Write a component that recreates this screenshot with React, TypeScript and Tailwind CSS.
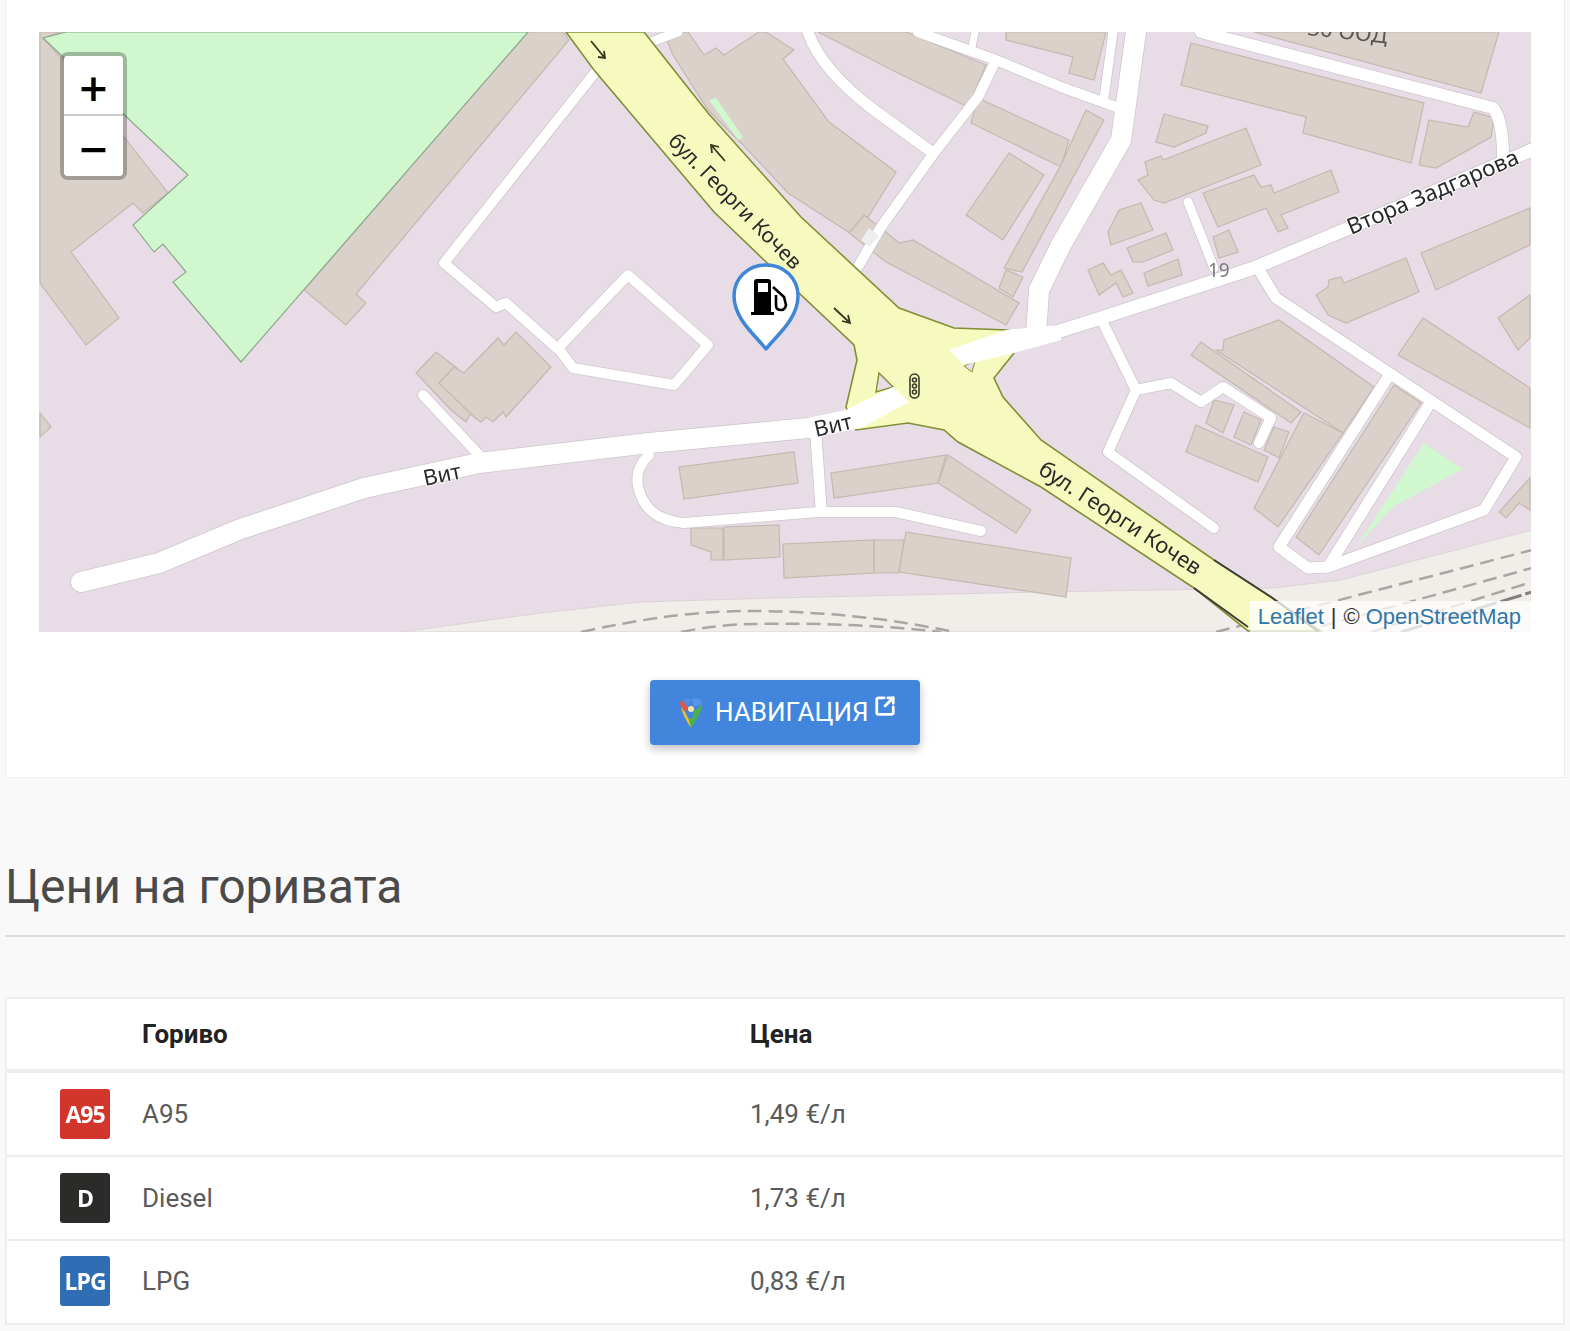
import React from 'react';
import { SquareArrowOutUpRight } from 'lucide-react';

const buildings = [
  '39,32 60,32 42,38 62,60 123,137 167,193 142,213 132,203 70,252 118,318 85,345 39,283',
  '527,32 562,32 568,40 355,294 365,303 345,325 303,290',
  '39,413 50,427 39,437',
  '665,38 680,32 687,32 703,55 715,48 723,55 758,32 765,32 793,50 782,59 828,122 895,172 855,237 787,193 747,150 707,110 672,55',
  '817,32 895,72 967,107 985,65 905,32',
  '977,98 1068,140 1060,167 970,123',
  '1085,110 1103,120 1021,272 1003,268 1060,165',
  '1005,270 1022,277 1012,297 998,288',
  '1008,153 1043,175 1002,240 965,215',
  '848,233 863,215 885,232 898,243 912,240 1018,303 1005,325 885,262',
  '1005,32 1005,40 1072,57 1068,73 1093,80 1105,32',
  '1253,32 1480,93 1498,32',
  '1190,43 1423,103 1410,163 1302,133 1305,117 1180,85',
  '1163,114 1207,126 1205,133 1173,147 1155,142',
  '1245,128 1260,165 1163,203 1153,200 1137,180 1147,175 1144,162 1160,156 1162,160',
  '1202,193 1253,175 1260,187 1270,185 1273,193 1330,170 1338,192 1280,215 1287,228 1277,232 1265,208 1217,227',
  '1212,237 1228,230 1237,252 1218,258',
  '1107,232 1118,210 1140,203 1152,230 1110,245',
  '1126,248 1165,233 1172,250 1142,262 1132,262',
  '1143,273 1177,259 1181,275 1147,286',
  '1087,270 1102,263 1110,275 1120,270 1132,293 1122,297 1115,283 1098,295',
  '1428,120 1467,127 1473,112 1493,118 1490,137 1435,168 1418,165',
  '1420,253 1529,208 1529,245 1435,290',
  '1315,295 1327,287 1328,280 1340,277 1343,283 1405,258 1418,292 1345,323 1327,315',
  '1497,318 1529,295 1529,338 1517,350',
  '1422,318 1529,388 1529,428 1397,355',
  '1222,350 1223,340 1278,320 1373,387 1342,433 1215,350',
  '1190,355 1200,342 1300,412 1290,423',
  '1303,413 1342,433 1277,527 1253,508',
  '1393,385 1420,403 1318,555 1295,537',
  '1213,400 1233,405 1222,433 1205,423',
  '1243,412 1260,420 1250,445 1233,437',
  '1195,425 1267,457 1257,482 1185,452',
  '1273,427 1288,432 1278,458 1263,450',
  '1529,478 1498,512 1505,518 1518,503 1529,510',
  '415,373 435,352 456,368 480,395 465,422 450,410',
  '438,383 453,367 463,373 497,338 503,345 515,332 550,367 505,417 502,412 492,422 485,417 480,422 473,417',
  '678,467 793,452 797,483 683,499',
  '830,473 945,455 937,483 833,498',
  '947,455 1030,510 1015,533 937,483',
  '690,528 722,528 722,560 710,560 710,552 690,545',
  '723,527 778,525 779,557 723,560',
  '782,544 873,540 873,573 783,578',
  '873,540 903,540 898,573 873,573',
  '905,532 1070,558 1065,597 898,572',
];

const parks = [
  '65,32 527,32 240,362 172,282 185,272 162,244 153,252 132,225 187,175 42,38',
  '708,100 715,98 742,137 737,140',
  '1423,443 1462,469 1392,507 1355,547',
];

const roads: [string, number][] = [
  ['M600 65 L443 263 L495 307 L505 303 L558 350', 10],
  ['M557 348 L572 368 L673 385 L707 345 L627 275 L557 348', 10],
  ['M422 395 L478 455', 10],
  ['M648 455 Q632 470 638 490 Q646 520 683 523 L817 512 L895 512 L980 531', 10],
  ['M815 437 L820 507', 11],
  ['M917 32 L995 60 L1060 87 L1118 108', 10],
  ['M974 32 L970 52', 7],
  ['M995 60 L977 97 L933 153 L880 227 L857 267', 10],
  ['M807 32 Q820 70 873 110 L932 153', 11],
  ['M650 42 L677 32', 9],
  ['M1112 32 L1103 98', 9],
  ['M1200 32 L1492 108 Q1502 120 1502 157', 12],
  ['M1187 202 L1213 268', 9],
  ['M1258 270 L1275 298 L1515 457 L1483 510 L1327 567 L1307 568 L1278 547 L1387 377', 11],
  ['M1428 405 L1327 567', 11],
  ['M1102 323 L1135 390 L1170 383 L1200 402 L1222 387 L1270 418 L1258 443', 10],
  ['M1135 390 L1107 452 L1213 528', 10],
  ['M1135 32 L1120 140 L1060 245 L1038 290 L1035 335', 20],
  ['M1040 337 L1100 318 L1253 268 L1348 228 L1531 150', 13],
  ['M80 582 L158 563 L237 530 L363 488 L478 463 L648 443 L807 428', 20],
];

const yellowRoad =
  '565,32 593,70 713,212 763,260 853,345 856,360 845,407 855,430 907,423 943,430 957,442 1040,487 1193,588 1247,631 1320,631 1270,597 1213,560 1040,440 1002,397 993,378 1013,353 1007,330 953,328 898,308 800,217 707,113 643,32';

function Arrow({ d }: { d: string }) {
  return <path d={d} fill="none" stroke="#333a1a" strokeWidth="1.8" />;
}

function MapDrawing() {
  return (
    <svg viewBox="39 32 1490 600" className="block w-full h-[600px] blur-[0.6px]">
      <polygon points="400,632 540,613 640,602 773,598 1040,592 1273,588 1340,580 1531,530 1531,632" fill="#f1eee9" stroke="#ddd3d6" />
      <g fill="none" stroke="#a9a6a3" strokeWidth="2.5" strokeDasharray="14 7">
        <path d="M580 632 Q680 610 753 611 Q860 612 953 632" />
        <path d="M680 632 Q720 624 753 624 Q850 622 940 632" />
        <path d="M1215 632 L1531 550" />
        <path d="M1300 632 L1531 568" />
        <path d="M1370 632 L1531 582" />
        <path d="M1400 632 L1531 592" stroke="#808080" strokeWidth="3" strokeDasharray="22 4" />
      </g>
      <g fill="#d9d1ca" stroke="#c4b8af" strokeWidth="1.2">
        {buildings.map((p) => (
          <polygon key={p} points={p} />
        ))}
      </g>
      <g fill="#d1f7cf">
        {parks.map((p, i) => (
          <polygon key={p} points={p} stroke={i === 0 ? '#8aa98a' : 'none'} strokeWidth="1.2" />
        ))}
      </g>
      <g fill="none" strokeLinecap="round" strokeLinejoin="round">
        {roads.map(([d, w]) => (
          <path key={d} d={d} stroke="#cfc6cc" strokeWidth={w + 1.6} />
        ))}
        {roads.map(([d, w]) => (
          <path key={d} d={d} stroke="#ffffff" strokeWidth={w} />
        ))}
      </g>
      <path d="M868 228 L878 236 L869 247 L860 240 Z" fill="#eeeeee" />
      <polygon points={yellowRoad} fill="#f7fabf" stroke="#7f8f35" strokeWidth="1.6" />
      <path d="M1213 560 L1270 597 L1318 632 M1193 588 L1247 627" fill="none" stroke="#3d3f38" strokeWidth="2" />
      <path d="M875 392 L878 373 L892 387 Z" fill="#e8dce7" stroke="#7f8f35" strokeWidth="1.4" />
      <path d="M963 366 L971 372 L974 361 Z" fill="#e8dce7" stroke="#7f8f35" />
      <polygon points="948,350 1005,330 1060,325 1060,340 1013,353 963,365" fill="#ffffff" />
      <polygon points="807,418 845,410 892,387 908,402 860,428 807,438" fill="#ffffff" />
      <Arrow d="M590 41 L603 57 M597 57 L604 58 L603 51" />
      <Arrow d="M724 161 L711 146 M711 153 L710 145 L718 147" />
      <Arrow d="M833 308 L848 322 M841 321 L849 323 L847 315" />
      <g fill="none" stroke="#3b3f2a" strokeWidth="1.6">
        <rect x="909" y="374" width="9" height="24" rx="4.5" />
        <circle cx="913.5" cy="380" r="2" />
        <circle cx="913.5" cy="386" r="2" />
        <circle cx="913.5" cy="392" r="2" />
      </g>
      <g fontFamily="'Noto Sans', sans-serif" fill="#2a2a2a" fontSize="22">
        <text transform="translate(666 142) rotate(45.6)" fontSize="21">бул. Георги Кочев</text>
        <text transform="translate(1036 473) rotate(33)">бул. Георги Кочев</text>
        <text transform="translate(424 486) rotate(-12)" stroke="#ffffff" strokeWidth="2" paintOrder="stroke">Вит</text>
        <text transform="translate(815 437) rotate(-13)" stroke="#ffffff" strokeWidth="2" paintOrder="stroke">Вит</text>
        <text transform="translate(1350 235) rotate(-23)" fontSize="22.5" stroke="#ffffff" strokeWidth="2" paintOrder="stroke">Втора Задгарова</text>
        <text transform="translate(1306 35) rotate(6)" fill="#555555">30 ООД</text>
        <text x="1207" y="277" fill="#7a7a7a" fontSize="19">19</text>
      </g>
      <path
        d="M765 349 C755 336 733 319 733 296 C733 278 747 265 765 265 C783 265 797 278 797 296 C797 319 775 336 765 349 Z"
        fill="#ffffff"
        stroke="#3f86d6"
        strokeWidth="3.5"
        strokeLinejoin="round"
      />
      <path d="M753 282 Q753 279 756 279 L767 279 Q770 279 770 282 L770 312 L773 312 L773 315 L750 315 L750 312 L753 312 Z M757 283 L757 292 L767 292 L767 283 Z" fill="#000000" fillRule="evenodd" />
      <path d="M772 287 L783 297 L785 305 Q784 310 780 310 Q775 310 775 305 L775 295" fill="none" stroke="#000000" strokeWidth="2.6" />
    </svg>
  );
}

function MapsPin() {
  return (
    <svg viewBox="0 0 24 30" className="w-6 h-[30px] blur-[0.7px]">
      <path d="M12 30 L18 20 L9 20 Z" fill="#4caf50" />
      <path d="M3 10 Q-1 5 3 2 L9 9 L6 15 Z" fill="#e2574c" />
      <path d="M3 2 Q8 -1 13 1 L9 9 Z" fill="#4b8de8" />
      <path d="M13 1 Q22 -1 23 6 L15 9 Z" fill="#5a95ea" />
      <path d="M2 9 L6 14 L10 22 L12 30 Q4 18 2 9 Z" fill="#f3c02c" />
      <path d="M23 6 Q24 13 12 30 L15 13 Z" fill="#4caf50" />
      <circle cx="12" cy="11" r="3" fill="#f4e6b0" />
    </svg>
  );
}

const fuels = [
  { label: 'A95', badge: 'A95', price: '1,49 €/л', color: 'bg-[#d1352c]' },
  { label: 'Diesel', badge: 'D', price: '1,73 €/л', color: 'bg-[#2b2b29]' },
  { label: 'LPG', badge: 'LPG', price: '0,83 €/л', color: 'bg-[#2f6eb5]' },
];

export default function App() {
  return (
    <div className="min-h-[1331px] bg-[#f9f9f9] px-[5px] text-[#5a5a5a] font-['Roboto',sans-serif]">
      <section className="border border-t-0 border-[#eeeeee] bg-white px-[33px] pt-[32px] pb-[32px]">
        <div className="relative h-[600px] overflow-hidden bg-[#e8dce7]">
          <MapDrawing />
          <div className="absolute left-[21px] top-[20px] w-[67px] rounded-[8px] border-[4px] border-[#00000040] bg-clip-padding">
            <div className="flex h-[60px] items-center justify-center rounded-t-[4px] border-b-2 border-[#cccccc] bg-white pt-[6px] font-['DejaVu_Sans',sans-serif] text-[38px] font-bold leading-none text-black">
              +
            </div>
            <div className="flex h-[60px] items-center justify-center rounded-b-[4px] bg-white pt-[6px] font-['DejaVu_Sans',sans-serif] text-[38px] font-bold leading-none text-black">
              −
            </div>
          </div>
          <div className="absolute bottom-0 right-0 flex h-[31px] items-center bg-white/75 pl-[8px] pr-[10px] font-['Liberation_Sans',sans-serif] text-[22px] text-[#333333]">
            <span className="text-[#2e77a8]">Leaflet</span>
            <span className="mx-[7px]">|</span>
            <span>©</span>
            <span className="ml-[6px] text-[#2e77a8]">OpenStreetMap</span>
          </div>
        </div>
        <div className="mt-[48px] flex justify-center">
          <a className="flex h-[65px] w-[270px] items-center rounded-[4px] bg-[#4285dc] pl-[29px] text-[26px] text-white shadow-[0_4px_10px_rgba(0,0,0,0.25)]">
            <MapsPin />
            <span className="ml-[12px]">НАВИГАЦИЯ</span>
            <SquareArrowOutUpRight className="ml-[5px] mb-[14px] h-[22px] w-[22px]" strokeWidth={3} />
          </a>
        </div>
      </section>

      <h2 className="mt-[81px] border-b-2 border-[#dddddd] pb-[20px] text-[48px] font-normal leading-[56px] text-[#4a4a4a]">
        Цени на горивата
      </h2>

      <table className="mt-[60px] w-full table-fixed border-separate border-spacing-0 border-2 border-[#eeeeee] bg-white text-[26px]">
        <colgroup>
          <col className="w-[135px]" />
          <col className="w-[608px]" />
          <col />
        </colgroup>
        <thead>
          <tr className="h-[74px] text-left text-[#222222]">
            <th className="border-b-4 border-[#eeeeee]" />
            <th className="border-b-4 border-[#eeeeee] text-[26px] font-bold">Гориво</th>
            <th className="border-b-4 border-[#eeeeee] text-[26px] font-bold">Цена</th>
          </tr>
        </thead>
        <tbody>
          {fuels.map((f, i) => (
            <tr key={f.label} className={i < 2 ? 'h-[84px]' : 'h-[82px]'}>
              <td className={i < 2 ? 'border-b-2 border-[#eeeeee] pl-[53px]' : 'pl-[53px] pb-[2px]'}>
                <div className={`flex h-[50px] w-[50px] items-center justify-center rounded-[3px] font-['Open_Sans',sans-serif] text-[23px] font-bold tracking-[-1px] text-white ${f.color}`}>
                  <span className="blur-[0.6px]">{f.badge}</span>
                </div>
              </td>
              <td className={i < 2 ? 'border-b-2 border-[#eeeeee]' : 'pb-[2px]'}>{f.label}</td>
              <td className={i < 2 ? 'border-b-2 border-[#eeeeee]' : 'pb-[2px]'}>{f.price}</td>
            </tr>
          ))}
        </tbody>
      </table>
    </div>
  );
}
